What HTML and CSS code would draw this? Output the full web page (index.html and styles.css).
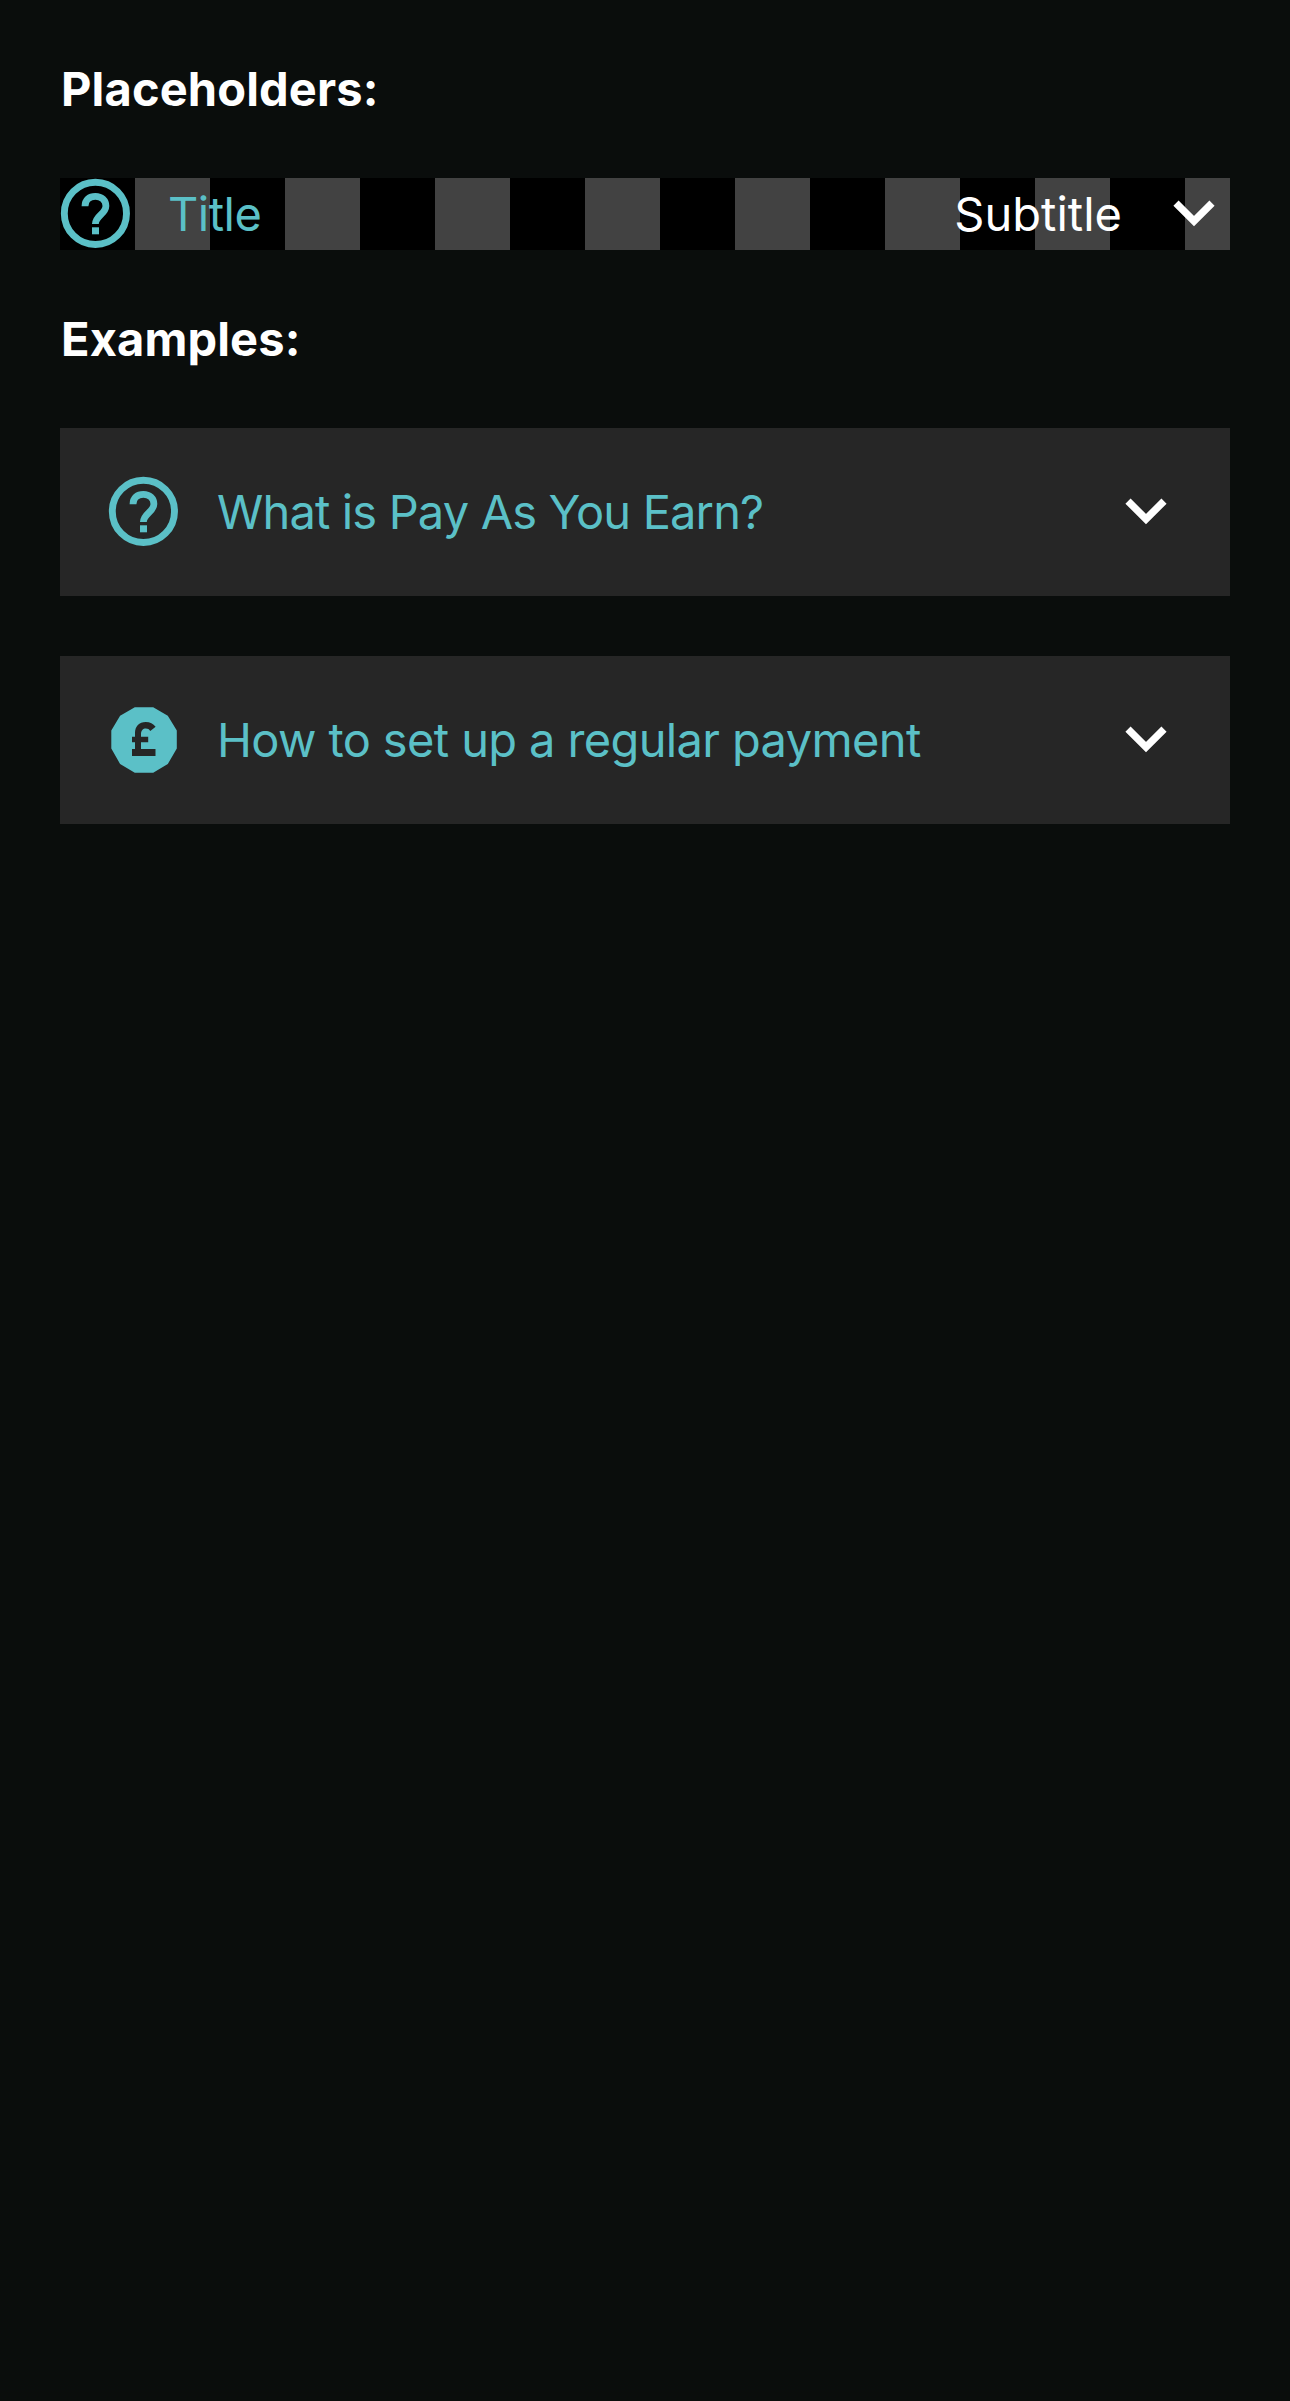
FILE: index.html
```html
<!DOCTYPE html>
<html lang="en">
<head>
<meta charset="utf-8">
<title>Accordion header</title>
<link rel="stylesheet" href="styles.css">
</head>
<body>
<svg class="sprite" aria-hidden="true">
  <symbol id="help" viewBox="0 0 72 72">
    <circle cx="35.4" cy="35.4" r="31.1" fill="none" stroke="currentColor" stroke-width="6.9"/>
    <path d="M25 28.3 C25 21.5 29.5 18.3 35.4 18.3 C41.5 18.3 45.9 22.5 45.9 28 C45.9 36 35.4 37.5 35.4 46" fill="none" stroke="currentColor" stroke-width="6.8"/>
    <path d="M32 49.3h7v7h-7z" fill="currentColor"/>
  </symbol>
  <symbol id="pound" viewBox="0 0 72 72">
    <path fill="currentColor" fill-rule="evenodd" d="M26.8 3.3H45.2L59.8 11.8L68.8 26.5V44.6L59.8 60L45.2 68.7H26.8L12.1 60L3.3 44.6V26.5L12.1 11.8ZM24 52H47.5V45H33V38.3H40.2V32.8H33V30C33 26.5 35 24.5 37.8 24.5C39.8 24.5 41.3 25.3 42.3 27L47.6 22.8C45.3 19.8 42 18 37.8 18C31 18 27 22.5 27 29V32.8H24V38.3H27V45H24Z"/>
  </symbol>
  <symbol id="chevron" viewBox="0 0 72 72">
    <path d="M18 25.1L36 43.1L54 25.1" fill="none" stroke="currentColor" stroke-width="7.3"/>
  </symbol>
</svg>
<main class="page">
  <h2 class="heading">Placeholders:</h2>
  <div class="row row-placeholder">
    <svg class="icon"><use href="#help"/></svg>
    <span class="title title-short">Title</span>
    <span class="subtitle">Subtitle</span>
    <svg class="icon chevron"><use href="#chevron"/></svg>
  </div>
  <h2 class="heading heading-examples">Examples:</h2>
  <div class="row card">
    <svg class="icon"><use href="#help"/></svg>
    <span class="title">What is Pay As You Earn?</span>
    <svg class="icon chevron"><use href="#chevron"/></svg>
  </div>
  <div class="row card">
    <svg class="icon"><use href="#pound"/></svg>
    <span class="title title-payment">How to set up a regular payment</span>
    <svg class="icon chevron"><use href="#chevron"/></svg>
  </div>
</main>
</body>
</html>
```
FILE: styles.css
```css
body {
  margin: 0;
  min-height: 2401px;
  background: #0a0d0c;
  color: #fff;
  font-family: Inter, "Liberation Sans", sans-serif;
  font-size: 47px;
  line-height: 60px;
}
.sprite { position: absolute; width: 0; height: 0; }
.page { padding: 59px 60px 0; }
.heading {
  margin: 0;
  padding-left: 1px;
  font-size: 47px;
  font-weight: 700;
  line-height: 60px;
  letter-spacing: 0.14px;
}
.heading-examples { margin-top: 59px; margin-bottom: 59px; }
.row { display: flex; align-items: center; height: 72px; }
.row-placeholder {
  margin-top: 59px;
  background: repeating-linear-gradient(90deg, #000 0 75px, #424242 75px 150px);
}
.icon { flex: none; width: 72px; height: 72px; color: #5bc0c7; }
.chevron { color: #fff; }
.title {
  flex: 1;
  margin-left: 37px;
  color: #5bc0c7;
  letter-spacing: -0.85px;
  white-space: nowrap;
}
.title-short { margin-left: 36px; letter-spacing: -0.5px; }
.title-payment { letter-spacing: -0.63px; }
.subtitle { margin-right: 36px; }
.card { height: 168px; padding: 0 48px; box-sizing: border-box; background: #262626; }
.card + .card { margin-top: 60px; }
```
